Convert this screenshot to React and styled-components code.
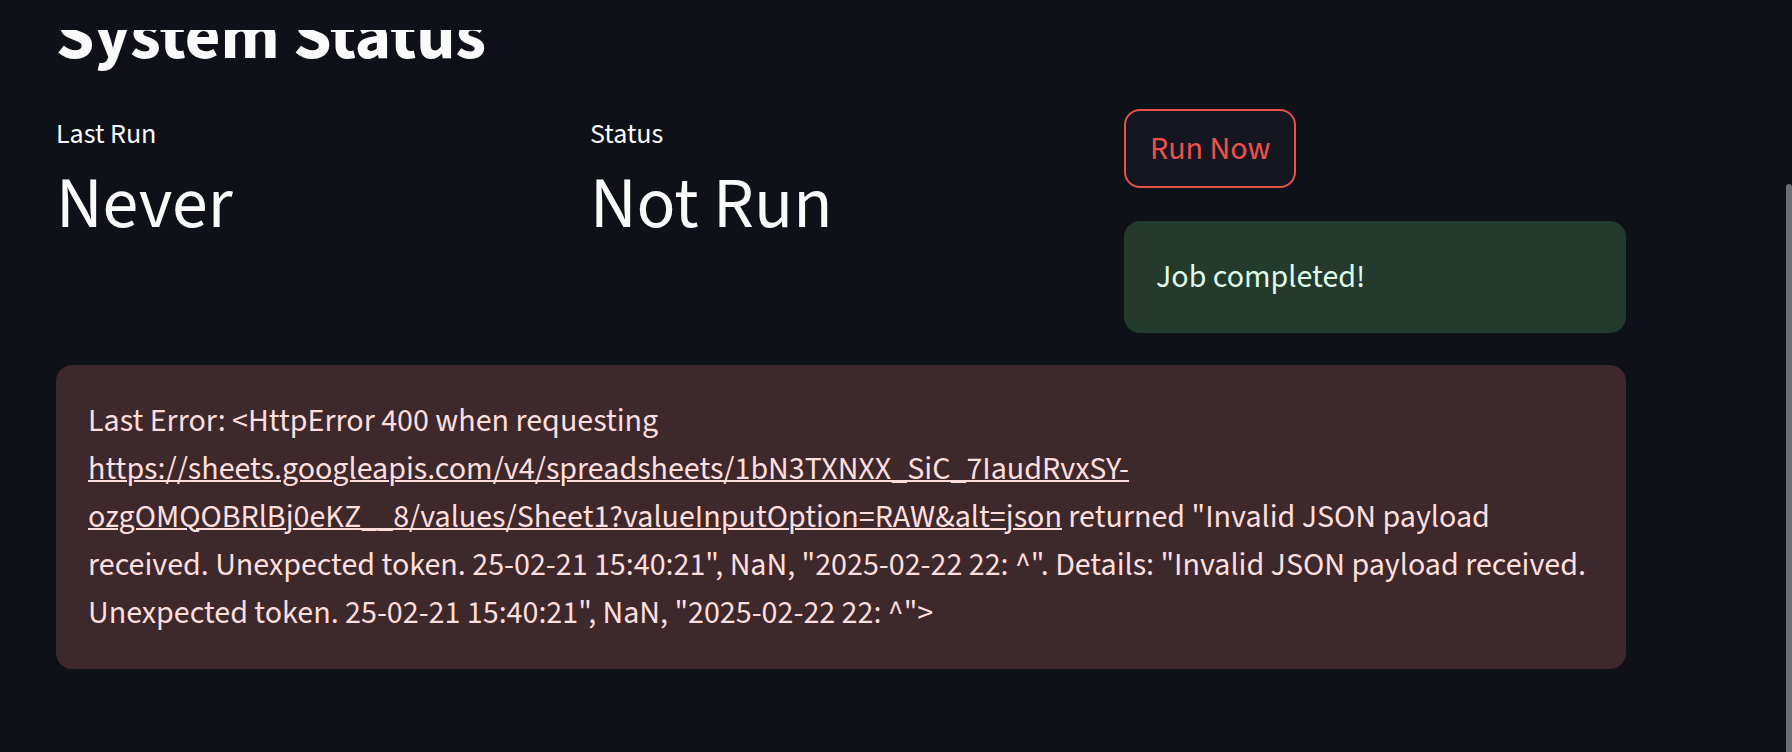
import React from "react";
import styled, { createGlobalStyle } from "styled-components";

const GlobalStyle = createGlobalStyle`
  html, body {
    margin: 0;
    padding: 0;
    background: #0e1117;
    overflow: hidden;
  }
  body {
    font-family: "Source Sans Pro", "Source Sans 3", Lato, "Noto Sans", sans-serif;
    color: #fafafa;
    -webkit-font-smoothing: antialiased;
  }
  * { box-sizing: border-box; }
`;

const Page = styled.main`
  position: relative;
  width: 1792px;
  height: 752px;
  overflow: hidden;
  padding-left: 56px;
`;

const HeaderBar = styled.header`
  position: absolute;
  top: 0;
  left: 0;
  right: 0;
  height: 30px;
  background: #0e1117;
  z-index: 2;
`;

const Block = styled.div`
  width: 1570px;
  display: flex;
  flex-direction: column;
`;

const Title = styled.h2`
  margin: -5px 0 0;
  font-size: 69px;
  font-weight: 700;
  line-height: 83px;
  color: #fafafa;
`;

const Columns = styled.div`
  margin-top: 31px;
  display: grid;
  grid-template-columns: repeat(3, 502px);
  column-gap: 32px;
  align-items: start;
`;

const Metric = styled.div`
  display: flex;
  flex-direction: column;
`;

const MetricLabel = styled.div`
  margin-top: 5px;
  font-size: 28px;
  line-height: 40px;
  color: #fafafa;
`;

const MetricValue = styled.div`
  margin-top: 8px;
  font-size: 72px;
  line-height: 86px;
  color: #fafafa;
`;

const ActionCol = styled.div`
  display: flex;
  flex-direction: column;
  align-items: flex-start;
  gap: 33px;
`;

const Button = styled.button`
  display: inline-flex;
  align-items: center;
  justify-content: center;
  height: 79px;
  padding: 0 24px;
  border: 2px solid #e8514c;
  border-radius: 16px;
  background: #141720;
  color: #ec514c;
  font-family: inherit;
  font-size: 32px;
  line-height: 1;
  cursor: pointer;
`;

const Alert = styled.div`
  width: 100%;
  border-radius: 16px;
  padding: 32px;
  background: ${(p) => (p.$kind === "success" ? "#233a2d" : "#3d282b")};
  color: ${(p) => (p.$kind === "success" ? "#dffde9" : "#ffdede")};
  font-size: 32px;
  line-height: 48px;
  white-space: nowrap;
`;

const ErrorAlert = styled(Alert)`
  margin-top: 32px;
`;

const Link = styled.a`
  color: inherit;
  text-decoration: underline;
  text-decoration-thickness: 2px;
`;

const ScrollThumb = styled.div`
  position: absolute;
  right: 0;
  top: 184px;
  width: 6px;
  height: 620px;
  border-radius: 3px 3px 0 0;
  background: #6e6e72;
  z-index: 3;
`;

export default function App() {
  return (
    <>
      <GlobalStyle />
      <Page>
        <HeaderBar />
        <Block>
          <Title>System Status</Title>
          <Columns>
            <Metric>
              <MetricLabel>Last Run</MetricLabel>
              <MetricValue>Never</MetricValue>
            </Metric>
            <Metric>
              <MetricLabel>Status</MetricLabel>
              <MetricValue>Not Run</MetricValue>
            </Metric>
            <ActionCol>
              <Button>Run Now</Button>
              <Alert $kind="success">Job completed!</Alert>
            </ActionCol>
          </Columns>
          <ErrorAlert $kind="error">
            Last Error: &lt;HttpError 400 when requesting
            <br />
            <Link href="#">
              https://sheets.googleapis.com/v4/spreadsheets/1bN3TXNXX_SiC_7IaudRvxSY-
              <br />
              ozgOMQOBRlBj0eKZ__8/values/Sheet1?valueInputOption=RAW&amp;alt=json
            </Link>{" "}
            returned "Invalid JSON payload
            <br />
            received. Unexpected token. 25-02-21 15:40:21", NaN, "2025-02-22 22: ^". Details: "Invalid JSON payload received.
            <br />
            Unexpected token. 25-02-21 15:40:21", NaN, "2025-02-22 22: ^"&gt;
          </ErrorAlert>
        </Block>
        <ScrollThumb />
      </Page>
    </>
  );
}
